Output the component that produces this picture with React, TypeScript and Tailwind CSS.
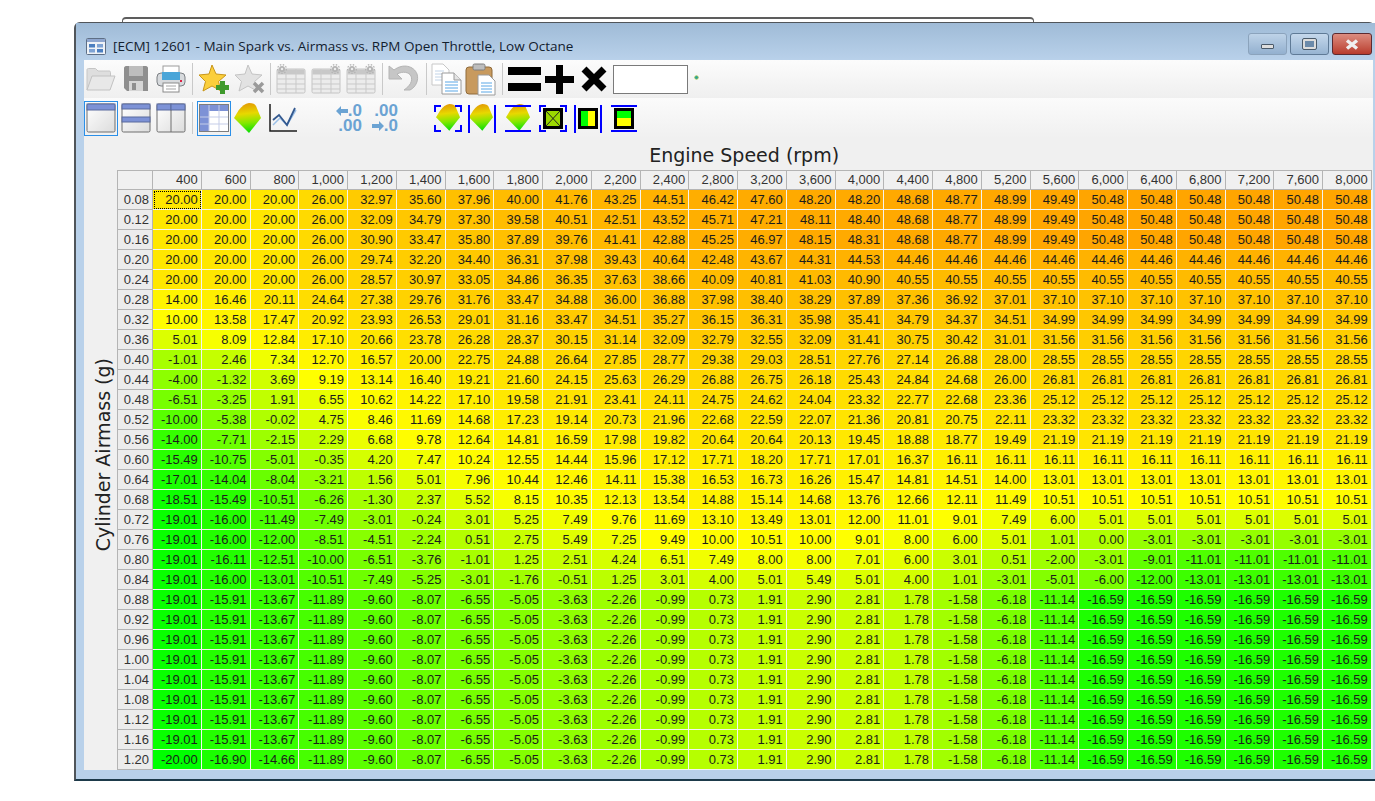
const rpm = ["400", "600", "800", "1,000", "1,200", "1,400", "1,600", "1,800", "2,000", "2,200", "2,400", "2,800", "3,200", "3,600", "4,000", "4,400", "4,800", "5,200", "5,600", "6,000", "6,400", "6,800", "7,200", "7,600", "8,000"];

const low = ["-19.01", "-15.91", "-13.67", "-11.89", "-9.60", "-8.07", "-6.55", "-5.05", "-3.63", "-2.26", "-0.99", "0.73", "1.91", "2.90", "2.81", "1.78", "-1.58", "-6.18", "-11.14", "-16.59"];

// a row shorter than 25 repeats its last value up to 8,000 rpm
const rows: [string, string[]][] = [
  ["0.08", ["20.00", "20.00", "20.00", "26.00", "32.97", "35.60", "37.96", "40.00", "41.76", "43.25", "44.51", "46.42", "47.60", "48.20", "48.20", "48.68", "48.77", "48.99", "49.49", "50.48"]],
  ["0.12", ["20.00", "20.00", "20.00", "26.00", "32.09", "34.79", "37.30", "39.58", "40.51", "42.51", "43.52", "45.71", "47.21", "48.11", "48.40", "48.68", "48.77", "48.99", "49.49", "50.48"]],
  ["0.16", ["20.00", "20.00", "20.00", "26.00", "30.90", "33.47", "35.80", "37.89", "39.76", "41.41", "42.88", "45.25", "46.97", "48.15", "48.31", "48.68", "48.77", "48.99", "49.49", "50.48"]],
  ["0.20", ["20.00", "20.00", "20.00", "26.00", "29.74", "32.20", "34.40", "36.31", "37.98", "39.43", "40.64", "42.48", "43.67", "44.31", "44.53", "44.46"]],
  ["0.24", ["20.00", "20.00", "20.00", "26.00", "28.57", "30.97", "33.05", "34.86", "36.35", "37.63", "38.66", "40.09", "40.81", "41.03", "40.90", "40.55"]],
  ["0.28", ["14.00", "16.46", "20.11", "24.64", "27.38", "29.76", "31.76", "33.47", "34.88", "36.00", "36.88", "37.98", "38.40", "38.29", "37.89", "37.36", "36.92", "37.01", "37.10"]],
  ["0.32", ["10.00", "13.58", "17.47", "20.92", "23.93", "26.53", "29.01", "31.16", "33.47", "34.51", "35.27", "36.15", "36.31", "35.98", "35.41", "34.79", "34.37", "34.51", "34.99"]],
  ["0.36", ["5.01", "8.09", "12.84", "17.10", "20.66", "23.78", "26.28", "28.37", "30.15", "31.14", "32.09", "32.79", "32.55", "32.09", "31.41", "30.75", "30.42", "31.01", "31.56"]],
  ["0.40", ["-1.01", "2.46", "7.34", "12.70", "16.57", "20.00", "22.75", "24.88", "26.64", "27.85", "28.77", "29.38", "29.03", "28.51", "27.76", "27.14", "26.88", "28.00", "28.55"]],
  ["0.44", ["-4.00", "-1.32", "3.69", "9.19", "13.14", "16.40", "19.21", "21.60", "24.15", "25.63", "26.29", "26.88", "26.75", "26.18", "25.43", "24.84", "24.68", "26.00", "26.81"]],
  ["0.48", ["-6.51", "-3.25", "1.91", "6.55", "10.62", "14.22", "17.10", "19.58", "21.91", "23.41", "24.11", "24.75", "24.62", "24.04", "23.32", "22.77", "22.68", "23.36", "25.12"]],
  ["0.52", ["-10.00", "-5.38", "-0.02", "4.75", "8.46", "11.69", "14.68", "17.23", "19.14", "20.73", "21.96", "22.68", "22.59", "22.07", "21.36", "20.81", "20.75", "22.11", "23.32"]],
  ["0.56", ["-14.00", "-7.71", "-2.15", "2.29", "6.68", "9.78", "12.64", "14.81", "16.59", "17.98", "19.82", "20.64", "20.64", "20.13", "19.45", "18.88", "18.77", "19.49", "21.19"]],
  ["0.60", ["-15.49", "-10.75", "-5.01", "-0.35", "4.20", "7.47", "10.24", "12.55", "14.44", "15.96", "17.12", "17.71", "18.20", "17.71", "17.01", "16.37", "16.11"]],
  ["0.64", ["-17.01", "-14.04", "-8.04", "-3.21", "1.56", "5.01", "7.96", "10.44", "12.46", "14.11", "15.38", "16.53", "16.73", "16.26", "15.47", "14.81", "14.51", "14.00", "13.01"]],
  ["0.68", ["-18.51", "-15.49", "-10.51", "-6.26", "-1.30", "2.37", "5.52", "8.15", "10.35", "12.13", "13.54", "14.88", "15.14", "14.68", "13.76", "12.66", "12.11", "11.49", "10.51"]],
  ["0.72", ["-19.01", "-16.00", "-11.49", "-7.49", "-3.01", "-0.24", "3.01", "5.25", "7.49", "9.76", "11.69", "13.10", "13.49", "13.01", "12.00", "11.01", "9.01", "7.49", "6.00", "5.01"]],
  ["0.76", ["-19.01", "-16.00", "-12.00", "-8.51", "-4.51", "-2.24", "0.51", "2.75", "5.49", "7.25", "9.49", "10.00", "10.51", "10.00", "9.01", "8.00", "6.00", "5.01", "1.01", "0.00", "-3.01"]],
  ["0.80", ["-19.01", "-16.11", "-12.51", "-10.00", "-6.51", "-3.76", "-1.01", "1.25", "2.51", "4.24", "6.51", "7.49", "8.00", "8.00", "7.01", "6.00", "3.01", "0.51", "-2.00", "-3.01", "-9.01", "-11.01"]],
  ["0.84", ["-19.01", "-16.00", "-13.01", "-10.51", "-7.49", "-5.25", "-3.01", "-1.76", "-0.51", "1.25", "3.01", "4.00", "5.01", "5.49", "5.01", "4.00", "1.01", "-3.01", "-5.01", "-6.00", "-12.00", "-13.01"]],
  ["0.88", low],
  ["0.92", low],
  ["0.96", low],
  ["1.00", low],
  ["1.04", low],
  ["1.08", low],
  ["1.12", low],
  ["1.16", low],
  ["1.20", ["-20.00", "-16.90", "-14.66", ...low.slice(3)]],
];

const cellValue = (values: string[], i: number) => values[Math.min(i, values.length - 1)];

// green at the bottom of the range, yellow near 10, orange at the top
const cellColor = (text: string) => {
  const v = parseFloat(text);
  if (v <= 9) return `rgb(${Math.round(((v + 20) / 29) * 255)},255,0)`;
  return `rgb(255,${Math.round(255 - ((v - 9) / 41.48) * 90)},0)`;
};

const Sep = ({ className }: { className: string }) => <div className={`h-[32px] w-px bg-[#c9c9c9] ${className}`} />;

const SmallTable = ({ className, gears }: { className: string; gears: number[] }) => (
  <svg width="30" height="30" viewBox="0 0 30 30" className={className}>
    <rect x="1" y="5" width="28" height="24" rx="1.5" fill="#ececec" stroke="#c4c4c4" />
    <rect x="1.5" y="5.5" width="27" height="5" fill="#c8c8c8" />
    <path d="M1 15h28M1 20h28M1 25h28M10 5v24M20 5v24" stroke="#c9c9c9" />
    {gears.map((x) => (
      <g key={x}>
        <circle cx={x} cy="5" r="3" fill="#b4b4b4" />
        <circle cx={x} cy="5" r="4.4" fill="none" stroke="#b4b4b4" strokeWidth="1.2" strokeDasharray="1.5 1.5" />
        <circle cx={x} cy="5" r="1.2" fill="#eee" />
      </g>
    ))}
  </svg>
);

const Surface = ({ id, x = 0, y = 0, w = 27 }: { id: string; x?: number; y?: number; w?: number }) => (
  <g transform={`translate(${x} ${y}) scale(${w / 27})`}>
    <defs>
      <linearGradient id={id} x1="0.45" y1="0" x2="0.55" y2="1">
        <stop offset="0" stopColor="#e39a05" />
        <stop offset="0.35" stopColor="#e8d800" />
        <stop offset="0.65" stopColor="#86e800" />
        <stop offset="1" stopColor="#05dd05" />
      </linearGradient>
    </defs>
    <path d="M0 15 4.5 7.5C8 3 11 .5 15 0c4 0 6 1 7 3l5 12-12 15Z" fill={`url(#${id})`} />
  </g>
);

const WindowPane = ({ children, className }: { children: React.ReactNode; className?: string }) => (
  <svg width="30" height="30" viewBox="0 0 30 30" className={className}>
    <defs>
      <linearGradient id="pane" x1="0" y1="0" x2="1" y2="1">
        <stop offset="0" stopColor="#fff" />
        <stop offset="1" stopColor="#dcdcdc" />
      </linearGradient>
    </defs>
    <rect x="1" y="1" width="28" height="28" rx="1.5" fill="url(#pane)" stroke="#6e6e6e" />
    {children}
  </svg>
);

const Bracket = ({ kind }: { kind: "corners" | "sides" | "ends" }) => {
  if (kind === "corners")
    return <path d="M1 8V2h6M21 2h6v6M27 21v6h-6M7 27H1v-6" fill="none" stroke="#0000ff" strokeWidth="2" />;
  if (kind === "sides") return <path d="M1 1v28M27 1v28" stroke="#0000ff" strokeWidth="2" />;
  return <path d="M1 2h26M1 27h26" stroke="#0000ff" strokeWidth="2" />;
};

const FirstToolbar = () => (
  <div className="flex h-[38px] items-center bg-gradient-to-b from-[#fcfcfc] to-[#efefef] pl-[2px]">
    <svg width="30" height="26" viewBox="0 0 30 26">
      <path d="M1 24V4c0-1 .5-1.500 1.500-1.500h7L12 5h11c1 0 1.500.5 1.500 1.500V10" fill="#dedede" stroke="#c6c6c6" />
      <path d="M1 24 6 10h23l-5 14Z" fill="#e8e8e8" stroke="#c2c2c2" />
    </svg>
    <svg width="26" height="28" viewBox="0 0 26 28" className="ml-[7px]">
      <path d="M1 3c0-1 1-2 2-2h20c1 0 2 1 2 2v23H4l-3-3Z" fill="#8f8f8f" />
      <rect x="6" y="1" width="14" height="10" fill="#bdbdbd" />
      <rect x="6" y="16" width="14" height="10" fill="#d6d6d6" />
      <rect x="9" y="18" width="4" height="7" fill="#8f8f8f" />
    </svg>
    <svg width="30" height="28" viewBox="0 0 30 28" className="ml-[7px]">
      <rect x="7" y="1" width="16" height="8" fill="#fff" stroke="#9c9c9c" />
      <rect x="1" y="8" width="28" height="13" rx="4" fill="#d7dadd" stroke="#7b7f83" />
      <rect x="6" y="7" width="18" height="8" fill="#4aa5d8" />
      <rect x="24" y="15" width="2" height="2" fill="#d24" />
      <rect x="7" y="18" width="16" height="9" fill="#fff" stroke="#8a8a8a" />
      <path d="M10 21h10M10 24h10" stroke="#a5a5a5" />
    </svg>
    <Sep className="ml-[6px]" />
    <svg width="32" height="30" viewBox="0 0 32 30" className="ml-[5px]">
      <path d="M14 1l4 9 10 1-7.500 6.500L23 27l-9-5-9 5 2.500-9.500L1 11l10-1Z" fill="#fbcf3c" stroke="#c8961a" />
      <rect x="18" y="21" width="13" height="5" fill="#3f9a2c" />
      <rect x="22" y="17" width="5" height="13" fill="#3f9a2c" />
    </svg>
    <svg width="31" height="30" viewBox="0 0 31 30" className="ml-[4px]">
      <path d="M14 1l4 9 10 1-7.500 6.500L23 27l-9-5-9 5 2.500-9.500L1 11l10-1Z" fill="#e2e2e2" stroke="#c4c4c4" />
      <path d="M20 19l9 9M29 19l-9 9" stroke="#9a9a9a" strokeWidth="3.500" />
    </svg>
    <Sep className="ml-[5px]" />
    <SmallTable className="ml-[5px]" gears={[6]} />
    <SmallTable className="ml-[5px]" gears={[24]} />
    <SmallTable className="ml-[5px]" gears={[6, 24]} />
    <Sep className="ml-[6px]" />
    <svg width="32" height="30" viewBox="0 0 32 30" className="ml-[5px]">
      <path d="M1 2v13h13l-5-5c6-3 12-2 14 2 2 5-1 10-7 14h6c6-3 9-10 7-16C26 2 15-1 6 6Z" fill="#c6c6c6" stroke="#b4b4b4" />
    </svg>
    <Sep className="ml-[6px]" />
    <svg width="31" height="32" viewBox="0 0 31 32" className="ml-[4px]">
      <path d="M1 1h11l6 6v15H1Z" fill="#fff" stroke="#c8c8c8" />
      <path d="M4 8h9M4 11h9M4 14h9M4 17h9" stroke="#c2d4e8" />
      <path d="M11 10h12l7 7v14H11Z" fill="#fff" stroke="#9a9a9a" />
      <path d="M23 10v7h7" fill="#e4e4e4" stroke="#9a9a9a" />
      <path d="M14 19h13M14 22h13M14 25h13M14 28h13" stroke="#5aa7e6" />
    </svg>
    <svg width="31" height="33" viewBox="0 0 31 33" className="ml-[3px]">
      <rect x="1" y="4" width="26" height="27" rx="3" fill="#c89a5e" stroke="#8f6a3a" />
      <rect x="8" y="1" width="12" height="6" rx="1.500" fill="#bdbdbd" stroke="#7f7f7f" />
      <path d="M13 12h11l6 6v14H13Z" fill="#fff" stroke="#9a9a9a" />
      <path d="M16 20h11M16 23h11M16 26h11M16 29h11" stroke="#5aa7e6" />
    </svg>
    <Sep className="ml-[6px]" />
    <svg width="33" height="26" viewBox="0 0 33 26" className="ml-[5px]">
      <path d="M0 1h33v8H0ZM0 17h33v8H0Z" fill="#000" />
    </svg>
    <svg width="29" height="29" viewBox="0 0 29 29" className="ml-[4px]">
      <path d="M11 0h7v11h11v7H18v11h-7V18H0v-7h11Z" fill="#000" />
    </svg>
    <svg width="26" height="26" viewBox="0 0 26 26" className="ml-[7px]">
      <path d="M3 3l20 20M23 3 3 23" stroke="#000" strokeWidth="7" />
    </svg>
    <div className="ml-[6px] h-[29px] w-[75px] border border-[#7a7a7a] bg-white" />
    <svg width="5" height="5" viewBox="0 0 5 5" className="ml-[6px] mb-[4px]">
      <circle cx="2.500" cy="2.500" r="1.800" fill="#2aa3a0" stroke="#9ec23c" strokeWidth=".7" />
    </svg>
  </div>
);

const SecondToolbar = () => (
  <div className="flex h-[40px] items-center bg-gradient-to-b from-[#fbfbfb] to-[#f0f0f0]">
    <div className="flex h-[35px] w-[34px] items-center justify-center border border-[#2a8fe8]">
      <WindowPane><rect x="1" y="1" width="28" height="6" fill="#7d92d6" stroke="#5a6a9e" /></WindowPane>
    </div>
    <WindowPane className="ml-[3px]">
      <rect x="1" y="1" width="28" height="5" fill="#7d92d6" stroke="#5a6a9e" />
      <rect x="1" y="14" width="28" height="5" fill="#7d92d6" stroke="#5a6a9e" />
    </WindowPane>
    <WindowPane className="ml-[5px]">
      <rect x="1" y="1" width="14" height="6" fill="#7d92d6" stroke="#5a6a9e" />
      <rect x="15" y="1" width="14" height="6" fill="#7d92d6" stroke="#5a6a9e" />
      <path d="M15 7v22" stroke="#6e6e6e" />
    </WindowPane>
    <Sep className="ml-[6px]" />
    <div className="ml-[4px] flex h-[35px] w-[34px] items-center justify-center border border-[#2a8fe8]">
      <svg width="30" height="28" viewBox="0 0 30 28">
        <rect x=".5" y=".5" width="29" height="27" fill="#fff" stroke="#7d7d7d" />
        <rect x="1" y="1" width="28" height="6" fill="#7d92d6" />
        <path d="M1 7h9v20H1Z" fill="#7d92d6" />
        <path d="M1 13h28M1 20h28M10 1v26M20 1v26" stroke="#c5cde8" />
      </svg>
    </div>
    <svg width="28" height="30" viewBox="0 0 28 30" className="ml-[3px]"><Surface id="s0" /></svg>
    <svg width="29" height="30" viewBox="0 0 29 30" className="ml-[7px]">
      <path d="M1 1v27h27" fill="none" stroke="#1c1c1c" strokeWidth="1.500" />
      <path d="M4 22l7-7 7 7 9-15" fill="none" stroke="#9cc0e8" strokeWidth="1.500" />
      <path d="M4 17l6-5 8 10 8-17" fill="none" stroke="#33598f" strokeWidth="1.800" />
    </svg>
    <div className="ml-[36px] flex w-[28px] flex-col font-['Liberation_Sans',sans-serif] text-[17px] leading-[15px] font-bold text-[#6ba3d3]">
      <span className="flex items-center justify-end">
        <svg width="12" height="10" viewBox="0 0 12 10"><path d="M0 5l5-5v3h7v4H5v3Z" fill="#6ba3d3" /></svg>
        .0
      </span>
      <span className="text-right">.00</span>
    </div>
    <div className="ml-[8px] flex w-[28px] flex-col font-['Liberation_Sans',sans-serif] text-[17px] leading-[15px] font-bold text-[#6ba3d3]">
      <span className="text-right">.00</span>
      <span className="flex items-center justify-end">
        <svg width="12" height="10" viewBox="0 0 12 10"><path d="M12 5 7 0v3H0v4h7v3Z" fill="#6ba3d3" /></svg>
        .0
      </span>
    </div>
    <svg width="28" height="29" viewBox="0 0 28 29" className="ml-[36px]"><Surface id="s1" x={2} y={0} w={24} /><Bracket kind="corners" /></svg>
    <svg width="28" height="29" viewBox="0 0 28 29" className="ml-[6px]"><Surface id="s2" x={1} y={0} w={24} /><Bracket kind="sides" /></svg>
    <svg width="28" height="29" viewBox="0 0 28 29" className="ml-[8px]"><Surface id="s3" x={2} y={0} w={24} /><Bracket kind="ends" /></svg>
    <svg width="28" height="29" viewBox="0 0 28 29" className="ml-[7px]">
      <Bracket kind="corners" />
      <rect x="5.500" y="5.500" width="17" height="18" fill="#9bd800" stroke="#000" strokeWidth="3" />
      <path d="M7 7l14 15M21 7 7 22" stroke="#222" />
    </svg>
    <svg width="28" height="29" viewBox="0 0 28 29" className="ml-[7px]">
      <Bracket kind="sides" />
      <rect x="5.500" y="5.500" width="17" height="18" fill="#ffff00" stroke="#000" strokeWidth="3" />
      <rect x="7" y="7" width="7" height="15" fill="#00ff00" />
    </svg>
    <svg width="28" height="29" viewBox="0 0 28 29" className="ml-[8px]">
      <Bracket kind="ends" />
      <rect x="5.500" y="5.500" width="17" height="18" fill="#ffff00" stroke="#000" strokeWidth="3" />
      <rect x="7" y="7" width="14" height="7" fill="#00ff00" />
    </svg>
  </div>
);

const MapTable = () => (
  <div className="grid grid-cols-[36.5px_repeat(25,48.75px)] auto-rows-[20px] font-['Liberation_Sans',sans-serif] text-[13px] text-[#1c1c1c]">
    <div className="border border-[#b4b4b4] bg-[#f0f0f0]" />
    {rpm.map((r) => (
      <div key={r} className="border-y border-r border-[#b4b4b4] bg-[#f0f0f0] pr-[3px] text-right leading-[18px] text-[#333]">
        {r}
      </div>
    ))}
    {rows.map(([load, values], rowIndex) => (
      <div key={load} className="contents">
        <div className="border-x border-b border-[#b4b4b4] bg-[#ececec] pr-[3px] text-right leading-[19px] text-[#333]">{load}</div>
        {rpm.map((_, i) => {
          const text = cellValue(values, i);
          return (
            <div
              key={i}
              style={{ backgroundColor: cellColor(text) }}
              className={`border-r border-b border-[#f4f4f0] pr-[3px] text-right leading-[19px] ${rowIndex === 0 && i === 0 ? "outline-1 -outline-offset-2 outline-dotted outline-black" : ""}`}
            >
              {text}
            </div>
          );
        })}
      </div>
    ))}
  </div>
);

export default function App() {
  return (
    <div className="relative h-[801px] overflow-hidden bg-white pt-[22px] pl-[74px]">
      <div className="absolute top-[17px] left-[122px] h-[8px] w-[912px] rounded-t-sm border-t-2 border-x border-[#5d5d5d]" />
      <div className="relative flex h-[759px] flex-col rounded-t-md border-t border-l-2 border-b-2 border-[#50555a] border-b-[#1d3a4a] bg-[#b9d1ea] pr-[2px] pb-[9px] pl-[8px]">
        <div className="-mx-[8px] -mr-[2px] flex h-[37px] items-center bg-gradient-to-b from-[#9fbbd7] to-[#b9d1ea] pl-[10px] pr-[3px] pt-[10px]">
          <svg width="20" height="17" viewBox="0 0 20 17">
            <rect x=".5" y=".5" width="19" height="16" rx="1" fill="#eef2f7" stroke="#5e6f86" />
            <rect x="1" y="1" width="18" height="3" fill="#8ea6cf" />
            <rect x="3" y="6" width="6" height="3.500" fill="#4c7fc0" />
            <rect x="11" y="6" width="6" height="3.500" fill="#7fa3d4" />
            <rect x="3" y="11" width="6" height="3.500" fill="#7fa3d4" />
            <rect x="11" y="11" width="6" height="3.500" fill="#4c7fc0" />
          </svg>
          <span className="ml-[7px] font-['Open_Sans',sans-serif] text-[13.500px] text-[#12202e]">
            [ECM] 12601 - Main Spark vs. Airmass vs. RPM Open Throttle, Low Octane
          </span>
          <div className="mt-[-5px] ml-auto flex items-center gap-[3px]">
            <div className="flex h-[22px] w-[39px] items-center justify-center rounded-[3px] border border-[#8ba3bc] bg-gradient-to-b from-[#bed3e8] to-[#93b0cf]">
              <div className="mt-[5px] h-[5px] w-[13px] rounded-[1px] border border-[#4a5a6a] bg-[#dedede]" />
            </div>
            <div className="flex h-[22px] w-[39px] items-center justify-center rounded-[3px] border border-[#5f7a96] bg-gradient-to-b from-[#c5d8ec] to-[#97b4d2]">
              <div className="h-[10px] w-[13px] rounded-[1px] border-2 border-[#dcdcdc] bg-[#6b8aaa] outline outline-[#4a5a6a]" />
            </div>
            <div className="flex h-[22px] w-[40px] items-center justify-center rounded-[3px] border border-[#5c2a30] bg-gradient-to-b from-[#dc8c80] to-[#b83a2c]">
              <svg width="14" height="11" viewBox="0 0 14 11"><path d="M2 1.500 12 9.500M12 1.500 2 9.500" stroke="#f0f0f0" strokeWidth="3.500" /></svg>
            </div>
          </div>
        </div>
        <div className="flex flex-1 flex-col bg-[#f0f0f0]">
          <FirstToolbar />
          <SecondToolbar />
          <div className="flex flex-1">
            <div className="flex w-[32.5px] items-center justify-center pl-[6px] pt-[2px]">
              <span className="rotate-180 font-['DejaVu_Sans',sans-serif] text-[19px] whitespace-nowrap text-[#222] [writing-mode:vertical-rl]">Cylinder Airmass (g)</span>
            </div>
            <div className="flex flex-col">
              <div className="flex h-[32px] items-center justify-center pt-[2px] font-['DejaVu_Sans',sans-serif] text-[19px] text-[#222]">Engine Speed (rpm)</div>
              <MapTable />
            </div>
          </div>
        </div>
      </div>
    </div>
  );
}
